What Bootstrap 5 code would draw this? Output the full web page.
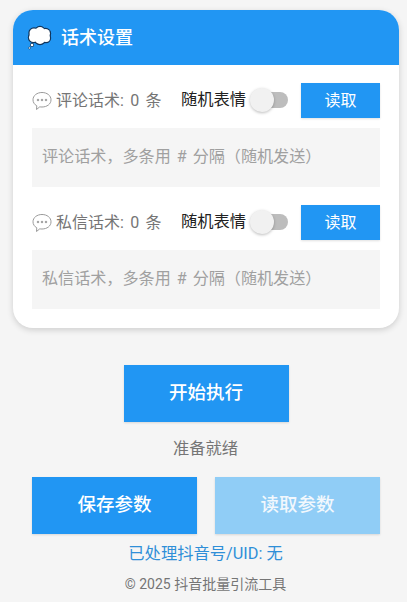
<!DOCTYPE html>
<html lang="zh-CN">
<head>
<meta charset="utf-8">
<link rel="stylesheet" href="https://cdn.jsdelivr.net/npm/bootstrap@5.3.0/dist/css/bootstrap.min.css">
<style>
html,body{height:602px;overflow:hidden}
body{background:#f5f5f5;font-family:Roboto,"Noto Sans CJK SC",sans-serif;padding:10px 8px 0 13px}
.panel{background:#fff;border-radius:20px;height:318px;box-shadow:0 2px 6px rgba(0,0,0,.16);overflow:hidden;width:386px}
.panel-head{background:#2196f3;height:55px;color:#fff;font-size:18px;font-weight:500;padding-left:14px;gap:9px}
.panel-body{padding:18px 19px 0}
.rowline{height:35px}
.lbl{color:#757575;font-size:16px;width:149px;gap:4px;white-space:nowrap;word-spacing:2.3px}
.rand{font-size:16.3px;color:#212121;white-space:nowrap;width:65px}
.sw{width:42px;height:24px;flex:none;margin-right:13px;margin-top:-2px}
.sw-track{left:14px;right:0;top:4px;height:16px;background:#bdbdbd;border-radius:8px}
.sw-knob{left:4px;top:0;width:24px;height:24px;border-radius:50%;background:#f1f1f1;box-shadow:0 1px 3px rgba(0,0,0,.25)}
.btn-read{background:#2196f3;color:#fff;font-size:16px;width:79px;height:35px;border:0;border-radius:0;padding:0;box-shadow:0 1px 2px rgba(0,0,0,.12)}
.ta{background:#f5f5f5;height:59px;color:#a0a0a0;font-size:16.1px;word-spacing:2px;padding:0 10px;margin-top:10px;margin-bottom:18px}
.btn-main{background:#2196f3;color:#fff;font-size:18.5px;font-weight:500;border:0;border-radius:0;padding:0;box-shadow:0 1px 2px rgba(0,0,0,.12)}
.btn-start{width:165px;height:57px}
.wrap-start{margin-top:37px}
.status{color:#757575;font-size:16.3px;height:24px;margin-top:15px;margin-left:-1px}
.duo{margin:16px 0 0 19px;width:349px;gap:18px}
.duo .btn-main{width:165px;height:57px}
.btn-main.faded{background:#90cdf6;color:#f2f8fd}
.uid{color:#2f8fd8;font-size:16.3px;margin:8px 0 0 -1px;line-height:24px}
.copy{color:#757575;font-size:14px;font-weight:400;margin:8px 0 0 -1px;line-height:20px}
</style>
</head>
<body>
<div class="panel">
  <div class="panel-head d-flex align-items-center">
    <svg width="25" height="25" viewBox="0 0 25 25"><g fill="#12355b" stroke="#12355b" stroke-width="2.400"><circle cx="7" cy="8" r="4.500"/><circle cx="13" cy="6.500" r="4.500"/><circle cx="18.500" cy="8.500" r="4.500"/><circle cx="19" cy="13" r="4"/><circle cx="13" cy="14" r="5"/><circle cx="6.500" cy="12.500" r="4.500"/><circle cx="5" cy="20" r="1.300" stroke-width="1.400"/><circle cx="2.500" cy="23" r=".8" stroke-width="1"/></g><g fill="#fff"><circle cx="7" cy="8" r="4.500"/><circle cx="13" cy="6.500" r="4.500"/><circle cx="18.500" cy="8.500" r="4.500"/><circle cx="19" cy="13" r="4"/><circle cx="13" cy="14" r="5"/><circle cx="6.500" cy="12.500" r="4.500"/><circle cx="5" cy="20" r="1.300"/><circle cx="2.500" cy="23" r=".8"/></g></svg>
    <span>话术设置</span>
  </div>
  <div class="panel-body">
    <div class="rowline d-flex align-items-center">
      <div class="lbl d-flex align-items-center">
        <svg width="20" height="20" viewBox="0 0 20 20" fill="none" stroke="#9a9a9a" stroke-width="1"><path d="M10 1.500c5 0 9 3 9 7.300s-4 7.200-9 7.200c-.8 0-1.500 0-2.200-.2L4.500 18.500l.3-3.700C2.400 13.500 1 11.300 1 8.800 1 4.500 5 1.500 10 1.500z"/><circle cx="6" cy="9" r=".8" fill="#9a9a9a"/><circle cx="10" cy="9" r=".8" fill="#9a9a9a"/><circle cx="14" cy="9" r=".8" fill="#9a9a9a"/></svg>
        <span>评论话术: 0 条</span>
      </div>
      <span class="rand">随机表情</span>
      <div class="sw position-relative"><div class="sw-track position-absolute"></div><div class="sw-knob position-absolute"></div></div>
      <button class="btn btn-read">读取</button>
    </div>
    <div class="ta d-flex align-items-center">评论话术，多条用 # 分隔（随机发送）</div>
    <div class="rowline d-flex align-items-center">
      <div class="lbl d-flex align-items-center">
        <svg width="20" height="20" viewBox="0 0 20 20" fill="none" stroke="#9a9a9a" stroke-width="1"><path d="M10 1.500c5 0 9 3 9 7.300s-4 7.200-9 7.200c-.8 0-1.500 0-2.200-.2L4.500 18.500l.3-3.700C2.400 13.500 1 11.300 1 8.800 1 4.500 5 1.500 10 1.500z"/><circle cx="6" cy="9" r=".8" fill="#9a9a9a"/><circle cx="10" cy="9" r=".8" fill="#9a9a9a"/><circle cx="14" cy="9" r=".8" fill="#9a9a9a"/></svg>
        <span>私信话术: 0 条</span>
      </div>
      <span class="rand">随机表情</span>
      <div class="sw position-relative"><div class="sw-track position-absolute"></div><div class="sw-knob position-absolute"></div></div>
      <button class="btn btn-read">读取</button>
    </div>
    <div class="ta d-flex align-items-center">私信话术，多条用 # 分隔（随机发送）</div>
  </div>
</div>
<div class="wrap-start d-flex justify-content-center"><button class="btn btn-main btn-start">开始执行</button></div>
<div class="status d-flex justify-content-center align-items-center">准备就绪</div>
<div class="duo d-flex">
  <button class="btn btn-main">保存参数</button>
  <button class="btn btn-main faded">读取参数</button>
</div>
<div class="uid text-center">已处理抖音号/UID: 无</div>
<div class="copy text-center">© 2025 抖音批量引流工具</div>
<script src="https://cdn.jsdelivr.net/npm/bootstrap@5.3.0/dist/js/bootstrap.bundle.min.js"></script>
</body>
</html>
